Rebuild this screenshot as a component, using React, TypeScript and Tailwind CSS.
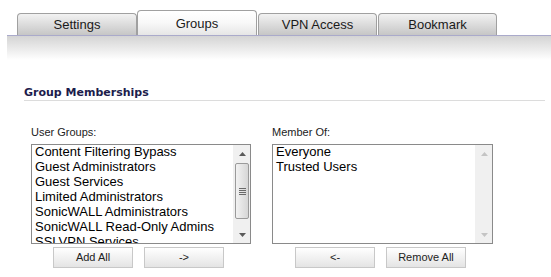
import React from "react";

const Arrow = ({ up, color }: { up: boolean; color: string }) => (
  <svg width="7" height="4" viewBox="0 0 7 4">
    {up ? <polygon points="0,4 7,4 3.5,0" fill={color} /> : <polygon points="0,0 7,0 3.5,4" fill={color} />}
  </svg>
);

const Scrollbar = ({ active }: { active: boolean }) => (
  <div className="w-[17px] h-full flex flex-col bg-[#f0f0f0] border-l border-[#f0f0f0]">
    <div className="h-[17px] flex items-center justify-center">
      <Arrow up color={active ? "#5a5a5a" : "#c4c4c4"} />
    </div>
    <div className="flex-1 relative">
      {active && (
        <div className="absolute left-[1px] right-[1px] top-[1px] h-[56px] rounded-[2px] border border-[#9a9a9a] bg-gradient-to-r from-[#f2f2f2] via-[#e4e4e4] to-[#d6d6d6] flex flex-col items-center justify-center gap-[1px]">
          <div className="w-[7px] h-px bg-[#6a6a6a]" />
          <div className="w-[7px] h-px bg-[#6a6a6a]" />
          <div className="w-[7px] h-px bg-[#6a6a6a]" />
          <div className="w-[7px] h-px bg-[#6a6a6a]" />
        </div>
      )}
    </div>
    <div className="h-[17px] flex items-center justify-center">
      <Arrow up={false} color={active ? "#5a5a5a" : "#c4c4c4"} />
    </div>
  </div>
);

const Tab = ({ label, active, w }: { label: string; active?: boolean; w: number }) => (
  <div
    style={{ width: w }}
    className={
      "flex items-center justify-center rounded-t-[4px] border border-b-0 border-[#a0a0a0] text-[13px] text-[#1a1a1a] " +
      (active
        ? "h-[25px] bg-gradient-to-b from-white via-[#f8f8f8] to-[#e6e6e6] pt-[1px]"
        : "h-[22px] bg-gradient-to-b from-[#f2f2f2] via-[#dcdcdc] to-[#c6c6c6]")
    }
  >
    {label}
  </div>
);

const Btn = ({ label }: { label: string }) => (
  <div className="w-[80px] h-[21px] flex items-center justify-center border border-[#c8c8c8] bg-gradient-to-b from-white to-[#e4e4e4] text-[11px] text-[#222]">
    {label}
  </div>
);

export default function App() {
  const groups = [
    "Content Filtering Bypass",
    "Guest Administrators",
    "Guest Services",
    "Limited Administrators",
    "SonicWALL Administrators",
    "SonicWALL Read-Only Admins",
    "SSLVPN Services",
  ];
  return (
    <div className="w-[551px] h-[277px] bg-white overflow-hidden font-['Liberation_Sans',Arial,sans-serif]">
      <div className="h-[35px] flex items-end pl-[17px]">
        <Tab label="Settings" w={120} />
        <Tab label="Groups" active w={120} />
        <div className="w-px" />
        <Tab label="VPN Access" w={119} />
        <div className="w-px" />
        <Tab label="Bookmark" w={119} />
      </div>
      <div className="ml-[7px] h-px bg-[#aaaacb]" />
      <div className="ml-[7px] h-[24px] bg-gradient-to-b from-[#d4d4d4] to-white" />
      <div className="mt-[26px] ml-[24px] mr-[6px] border-b border-[#dcdcdc] pb-[1px]">
        <div className="font-['DejaVu_Sans',Verdana,sans-serif] font-bold text-[11px] leading-[13px] text-[#1c1c4c]">
          Group Memberships
        </div>
      </div>
      <div className="flex mt-[25px] ml-[31px] gap-[21px]">
        <div className="w-[220px] flex flex-col">
          <div className="text-[11px] leading-[13px] text-[#222]">User Groups:</div>
          <div className="mt-[5px] h-[100px] border border-[#8a8a8a] flex">
            <div className="flex-1 overflow-hidden pl-[3px] text-[13px] leading-[15px] text-black">
              <div className="-mt-[1px]">
                {groups.map((g) => (
                  <div key={g} className="whitespace-nowrap">{g}</div>
                ))}
              </div>
            </div>
            <Scrollbar active />
          </div>
          <div className="mt-[3px] flex gap-[11px] pl-[22px]">
            <Btn label="Add All" />
            <Btn label="->" />
          </div>
        </div>
        <div className="w-[221px] flex flex-col">
          <div className="text-[11px] leading-[13px] text-[#222]">Member Of:</div>
          <div className="mt-[5px] h-[100px] border border-[#8a8a8a] flex">
            <div className="flex-1 overflow-hidden pl-[3px] text-[13px] leading-[15px] text-black">
              <div className="-mt-[1px]">
                <div>Everyone</div>
                <div>Trusted Users</div>
              </div>
            </div>
            <Scrollbar active={false} />
          </div>
          <div className="mt-[3px] flex gap-[11px] pl-[23px]">
            <Btn label="<-" />
            <Btn label="Remove All" />
          </div>
        </div>
      </div>
    </div>
  );
}
